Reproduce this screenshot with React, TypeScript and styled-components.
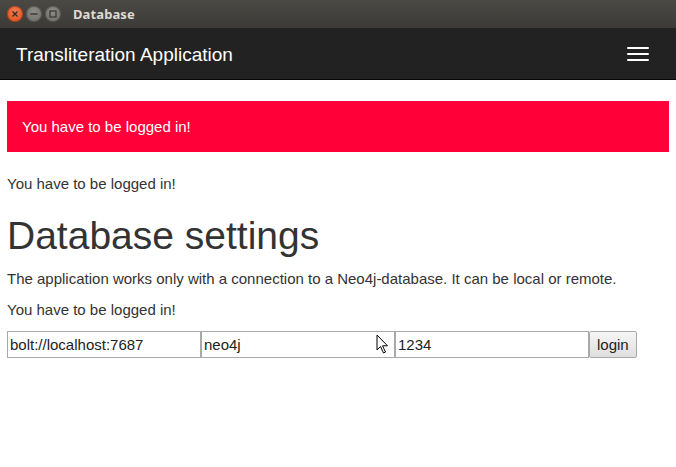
import styled, { createGlobalStyle } from 'styled-components';

const GlobalStyle = createGlobalStyle`
  html, body {
    margin: 0;
    padding: 0;
    background: #ffffff;
  }
  body {
    font-family: "Liberation Sans", Arial, sans-serif;
    font-size: 15px;
    line-height: 1.42857;
    color: #333333;
  }
`;

const Window = styled.div`
  position: relative;
  display: flex;
  flex-direction: column;
  width: 676px;
  height: 467px;
  overflow: hidden;
  background: #ffffff;
`;

const TitleBar = styled.div`
  display: flex;
  align-items: center;
  height: 28px;
  padding: 0 0 0 7px;
  box-sizing: border-box;
  background: linear-gradient(#4a4944, #3c3b37);
`;

const WindowButtons = styled.div`
  display: flex;
  gap: 3px;
  margin-right: 12px;
`;

const CircleButton = styled.span<{ $close?: boolean }>`
  display: flex;
  align-items: center;
  justify-content: center;
  width: 16px;
  height: 16px;
  border-radius: 50%;
  background: ${(p) =>
    p.$close
      ? 'radial-gradient(circle at 50% 35%, #f37b4f, #df4b16)'
      : 'radial-gradient(circle at 50% 35%, #8e8d88, #6a6964)'};
  box-shadow: inset 0 0 0 1px rgba(0, 0, 0, 0.25);
`;

const WindowTitle = styled.span`
  font-family: "Noto Sans", "DejaVu Sans", sans-serif;
  font-weight: bold;
  font-size: 13px;
  color: #dfdbd2;
  letter-spacing: 0.1px;
`;

const Navbar = styled.nav`
  display: flex;
  align-items: center;
  justify-content: space-between;
  height: 51px;
  padding: 0 27px 0 16px;
  background: #222222;
  border-bottom: 1px solid #080808;
`;

const Brand = styled.span`
  font-size: 19px;
  line-height: 21px;
  color: #ffffff;
  margin-top: 1px;
`;

const Toggle = styled.button`
  display: flex;
  flex-direction: column;
  gap: 4px;
  padding: 0;
  margin: 0;
  border: none;
  background: transparent;
`;

const Bar = styled.span`
  display: block;
  width: 22px;
  height: 2px;
  border-radius: 1px;
  background: #ffffff;
`;

const Container = styled.main`
  padding: 21px 7px 0;
`;

const Alert = styled.div`
  padding: 15px;
  margin-bottom: 21px;
  background: #ff0039;
  color: #ffffff;
`;

const Message = styled.div`
  margin: 0;
`;

const Heading = styled.h1`
  margin: 20px 0 10px;
  font-size: 39px;
  font-weight: normal;
  line-height: 1.1;
  color: #333333;
`;

const Text = styled.p`
  margin: 0 0 10px;
`;

const LoginForm = styled.form`
  display: flex;
  margin: 0;
`;

const Field = styled.input`
  width: 194px;
  height: 27px;
  box-sizing: border-box;
  padding: 1px 2px;
  margin: 0;
  border: 1px solid #a9a9a9;
  font-family: "Liberation Sans", Arial, sans-serif;
  font-size: 15px;
  color: #222222;
  background: #ffffff;
  outline: none;
`;

const SubmitButton = styled.button`
  height: 27px;
  box-sizing: border-box;
  padding: 0 7px;
  margin: 0;
  border: 1px solid #a9a9a9;
  border-radius: 2px;
  background: linear-gradient(#f6f6f6, #dedede);
  font-family: "Liberation Sans", Arial, sans-serif;
  font-size: 15px;
  color: #222222;
`;

const Pointer = styled.svg`
  position: absolute;
  left: 376px;
  top: 334px;
`;

export default function App() {
  return (
    <>
      <GlobalStyle />
      <Window>
        <TitleBar>
          <WindowButtons>
            <CircleButton $close>
              <svg width="8" height="8" viewBox="0 0 8 8">
                <path d="M1.5 1.5 L6.5 6.5 M6.5 1.5 L1.5 6.5" stroke="#3a2a22" strokeWidth="1.4" />
              </svg>
            </CircleButton>
            <CircleButton>
              <svg width="8" height="8" viewBox="0 0 8 8">
                <path d="M0.5 4 H7.5" stroke="#3c3b37" strokeWidth="1.5" />
              </svg>
            </CircleButton>
            <CircleButton>
              <svg width="8" height="8" viewBox="0 0 8 8">
                <rect x="1" y="1" width="6" height="6" fill="none" stroke="#3c3b37" strokeWidth="1.3" />
              </svg>
            </CircleButton>
          </WindowButtons>
          <WindowTitle>Database</WindowTitle>
        </TitleBar>
        <Navbar>
          <Brand>Transliteration Application</Brand>
          <Toggle type="button" aria-label="Toggle navigation">
            <Bar />
            <Bar />
            <Bar />
          </Toggle>
        </Navbar>
        <Container>
          <Alert>You have to be logged in!</Alert>
          <Message>You have to be logged in!</Message>
          <Heading>Database settings</Heading>
          <Text>The application works only with a connection to a Neo4j-database. It can be local or remote.</Text>
          <Text>You have to be logged in!</Text>
          <LoginForm onSubmit={(e) => e.preventDefault()}>
            <Field defaultValue="bolt://localhost:7687" />
            <Field defaultValue="neo4j" />
            <Field defaultValue="1234" />
            <SubmitButton type="submit">login</SubmitButton>
          </LoginForm>
        </Container>
        <Pointer width="13" height="21" viewBox="0 0 13 21">
          <path
            d="M1 1 L1 16 L4.5 12.5 L7.5 19 L9.5 18 L6.5 11.8 L11.5 11.8 Z"
            fill="#ffffff"
            stroke="#000000"
            strokeWidth="1"
            strokeLinejoin="round"
          />
        </Pointer>
      </Window>
    </>
  );
}
